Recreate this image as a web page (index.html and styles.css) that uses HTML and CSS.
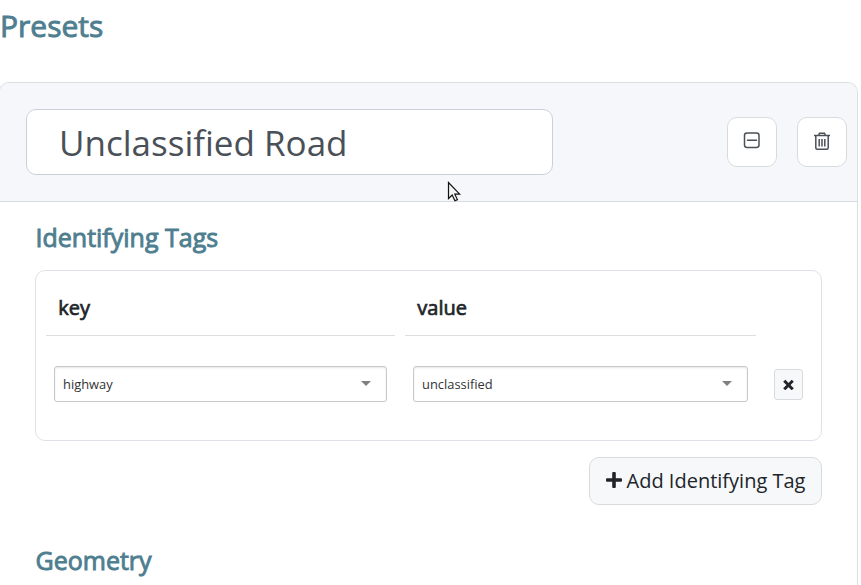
FILE: index.html
```
<!DOCTYPE html>
<html lang="en">
<head>
<meta charset="utf-8">
<title>Presets</title>
<link rel="stylesheet" href="styles.css">
</head>
<body>
<h1 class="page-title">Presets</h1>
<section class="preset">
  <header class="preset-header">
    <div class="preset-name">Unclassified Road</div>
    <div class="preset-actions">
      <button class="icon-button" aria-label="Collapse"><svg width="18" height="18" viewBox="0 0 18 18"><rect x="1.500" y="1" width="14.500" height="14.500" rx="2.400"/><path d="M4 8.300h10"/></svg></button>
      <button class="icon-button" aria-label="Delete"><svg width="18" height="18" viewBox="0 0 18 18"><path d="M1 3.500h16M5.500 3.500L6.500 1.300h5l1 2.200M2.800 3.500v12.200q0 1.500 1.500 1.500h9.400q1.500 0 1.500-1.500v-12.200M6.200 7v7.500M9 7v7.500M11.800 7v7.500"/></svg></button>
    </div>
  </header>
  <div class="preset-body">
    <h2 class="section-title">Identifying Tags</h2>
    <div class="tags">
      <div class="head">key</div>
      <div class="head">value</div>
      <div></div>
      <div class="cell"><div class="select">highway<span class="caret"></span></div></div>
      <div class="cell"><div class="select">unclassified<span class="caret"></span></div></div>
      <div class="cell-remove"><button class="remove" aria-label="Remove"><svg width="11" height="11" viewBox="0 0 11 11"><path d="M2.300 2.800l6.400 6.400M8.700 2.800l-6.400 6.400"/></svg></button></div>
    </div>
    <div class="add-row"><button class="add"><svg width="16" height="16" viewBox="0 0 16 16"><path d="M1 6.200h5.200V1q0-1 1-1h1.600q1 0 1 1v5.200H15q1 0 1 1v1.600q0 1-1 1H9.800V15q0 1-1 1H7.200q-1 0-1-1V9.800H1q-1 0-1-1V7.200q0-1 1-1z"/></svg><span>Add Identifying Tag</span></button></div>
    <h2 class="section-title">Geometry</h2>
  </div>
</section>
<svg class="cursor" width="14" height="22" viewBox="0 0 14 22"><path d="M1.500 1.500v16l3.700-3.500 2.700 5.800 2.500-1.200-2.600-5.400h4.900z"/></svg>
</body>
</html>
```
FILE: styles.css
```
* { box-sizing: border-box; }
body {
  margin: 0;
  background: #fff;
  color: #212529;
  font-family: "Open Sans", "Noto Sans", sans-serif;
}
h1, h2 { margin: 0; font-weight: 400; color: #4e7e8f; -webkit-text-stroke: 0.9px #4e7e8f; }
button { margin: 0; padding: 0; font: inherit; color: inherit; }
.page-title { height: 82px; padding-top: 6px; font-size: 30px; line-height: 40px; }
.preset {
  width: 859px;
  height: 503px;
  margin-left: -1px;
  border: 1px solid #dcdfe2;
  border-bottom: 0;
  border-radius: 10px 10px 0 0;
  overflow: hidden;
}
.preset-header {
  display: flex;
  align-items: center;
  justify-content: space-between;
  height: 119px;
  padding: 0 10px 0 26px;
  background: #f6f7fa;
  border-bottom: 1px solid #d7dbdf;
}
.preset-name {
  width: 527px;
  height: 66px;
  padding-left: 32px;
  border: 1px solid #c8d1da;
  border-radius: 10px;
  background: #fff;
  color: #495057;
  font-size: 35px;
  line-height: 66px;
}
.preset-actions { display: flex; gap: 20px; }
.icon-button {
  display: flex;
  align-items: center;
  justify-content: center;
  width: 50px;
  height: 50px;
  padding-bottom: 2px;
  border: 1px solid #d8dbde;
  border-radius: 10px;
  background: #fff;
}
.icon-button svg { fill: none; stroke: #495057; stroke-width: 1.5; }
.preset-body { padding: 17px 35px 0; }
.section-title { padding-left: 0.5px; font-size: 25px; line-height: 36px; }
.tags {
  display: grid;
  grid-template-columns: 349px 351px 1fr;
  column-gap: 10px;
  align-content: start;
  height: 171px;
  margin-top: 15px;
  padding: 10px 10px 0;
  border: 1px solid #dee2e8;
  border-radius: 10px;
}
.head {
  height: 55px;
  padding-left: 12.3px;
  border-bottom: 1px solid #dcdfe2;
  font-size: 20px;
  line-height: 53px;
  -webkit-text-stroke: 0.7px #212529;
}
.cell { padding: 30px 8px 0; }
.select {
  display: flex;
  align-items: center;
  justify-content: space-between;
  height: 36px;
  padding: 0 15px 0 8px;
  border: 1px solid #c6c8ca;
  border-radius: 3px;
  box-shadow: inset 0 1px 2px rgba(0, 0, 0, 0.1);
  color: #333;
  font-size: 12.9px;
}
.caret { margin-top: -1px; border: 5px solid transparent; border-top-color: #808080; border-bottom: 0; }
.cell-remove { padding: 33px 0 0 8px; }
.remove {
  display: flex;
  align-items: center;
  justify-content: center;
  width: 29px;
  height: 31px;
  border: 1px solid #d8dbde;
  border-radius: 3px;
  background: #f6f8fa;
}
.remove svg { fill: none; stroke: #212529; stroke-width: 3; stroke-linecap: square; }
.add-row { display: flex; justify-content: flex-end; margin: 16px 0 37px; }
.add {
  display: flex;
  align-items: center;
  justify-content: center;
  gap: 5px;
  width: 233px;
  height: 48px;
  padding-bottom: 2px;
  border: 1px solid #d8dbde;
  border-radius: 10px;
  background: #f6f8fa;
  font-size: 20px;
  white-space: nowrap;
}
.add svg { fill: #212529; }
.cursor { position: absolute; left: 447px; top: 181px; fill: #f4f4f4; stroke: #111; stroke-width: 1.2; }
```
